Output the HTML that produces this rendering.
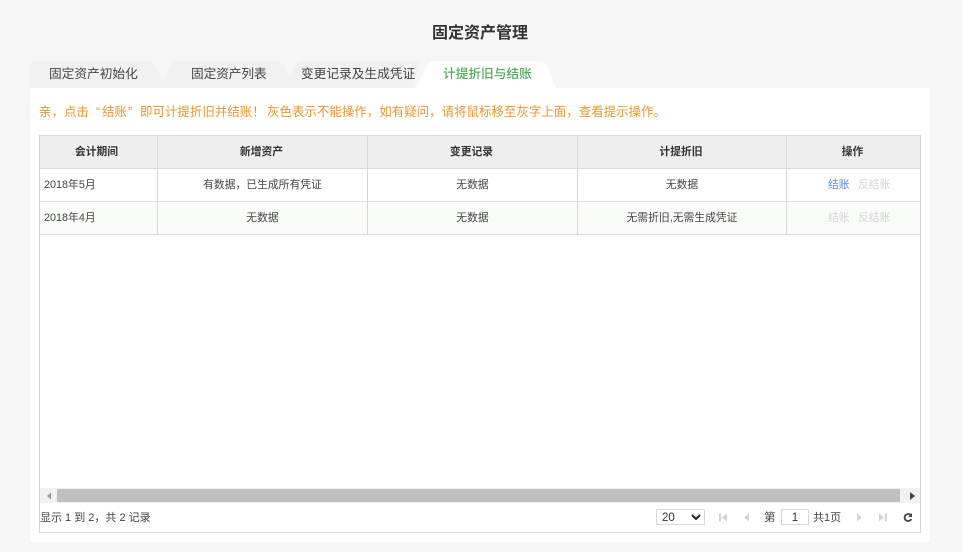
<!DOCTYPE html>
<html lang="zh-CN"><head><meta charset="utf-8"><style>
*{box-sizing:border-box;margin:0;padding:0}
html,body{width:963px;height:552px;overflow:hidden;background:#f6f6f6;font-family:"Liberation Sans","Noto Sans CJK SC",sans-serif;color:#333}
.a{position:absolute;white-space:nowrap}
.c{text-align:center}
.v{position:absolute;width:1px;background:#d6d6d6}
.h{position:absolute;height:1px;background:#dcdcdc;left:39px;width:882px}
.t{font-size:12.7px;top:65px;line-height:18px;color:#444}
.b{font-size:10.8px;line-height:16px;color:#444}
.th{font-size:10.8px;line-height:16px;top:144px;color:#333;font-weight:bold}
.n{position:absolute;white-space:nowrap;top:103px;font-size:12.48px;line-height:18px;color:#e8962e}
</style></head><body>
<div class="a c" style="left:380px;width:200px;top:23px;font-size:16px;line-height:22px;font-weight:bold;color:#333">固定资产管理</div>

<svg class="a" style="left:0;top:0" width="963" height="100">
<path d="M30 88V69Q30 61 38 61H148Q153 61 155 65L163 82L171 65Q173 61 178 61H276Q281 61 283 64L290 78L295 66Q297 61 302 61H420L412 88Z" fill="#f1f1f1"/>
<path d="M416 88L426 67Q429 61 436 61H538Q545 61 547 66L556 88Z" fill="#fff"/>
</svg>
<div class="a" style="left:30px;top:88px;width:900px;height:454px;background:#fff"></div>

<div class="a t" style="left:49px">固定资产初始化</div>
<div class="a t" style="left:191px;letter-spacing:-.1px">固定资产列表</div>
<div class="a t" style="left:301px">变更记录及生成凭证</div>
<div class="a t" style="left:443px;color:#52ad5c;font-weight:500">计提折旧与结账</div>

<div class="n" style="left:39px">亲，点击</div>
<div class="n" style="left:96px">“</div>
<div class="n" style="left:102px">结账</div>
<div class="n" style="left:128px">”</div>
<div class="n" style="left:140px">即可计提折旧并结账！</div>
<div class="n" style="left:267px">灰色表示不能操作，如有疑问，请将鼠标移至灰字上面，查看提示操作。</div>

<div class="a" style="left:39px;top:135px;width:882px;height:398px;border:1px solid #d6d6d6;background:#fff"></div>
<div class="a" style="left:40px;top:136px;width:880px;height:32px;background:#eeeeee"></div>
<div class="a" style="left:40px;top:202px;width:880px;height:32px;background:#fafcfa"></div>
<div class="h" style="top:168px"></div>
<div class="h" style="top:201px"></div>
<div class="h" style="top:234px"></div>
<div class="v" style="left:157px;top:136px;height:99px"></div>
<div class="v" style="left:367px;top:136px;height:99px"></div>
<div class="v" style="left:577px;top:136px;height:99px"></div>
<div class="v" style="left:786px;top:136px;height:99px"></div>

<div class="a c th" style="left:38px;width:117px">会计期间</div>
<div class="a c th" style="left:157px;width:209px">新增资产</div>
<div class="a c th" style="left:367px;width:209px">变更记录</div>
<div class="a c th" style="left:577px;width:208px">计提折旧</div>
<div class="a c th" style="left:786px;width:133px">操作</div>

<div class="a b" style="left:44px;top:177px">2018年5月</div>
<div class="a c b" style="left:158px;width:209px;top:177px">有数据，已生成所有凭证</div>
<div class="a c b" style="left:368px;width:209px;top:177px">无数据</div>
<div class="a c b" style="left:578px;width:208px;top:177px">无数据</div>
<div class="a b" style="left:828px;top:177px;color:#5b8ddc">结账</div>
<div class="a b" style="left:858px;top:177px;color:#d4d4d4">反结账</div>

<div class="a b" style="left:44px;top:210px">2018年4月</div>
<div class="a c b" style="left:158px;width:209px;top:210px">无数据</div>
<div class="a c b" style="left:368px;width:209px;top:210px">无数据</div>
<div class="a c b" style="left:578px;width:208px;top:210px">无需折旧,无需生成凭证</div>
<div class="a b" style="left:828px;top:210px;color:#d4d4d4">结账</div>
<div class="a b" style="left:858px;top:210px;color:#d4d4d4">反结账</div>

<div class="a" style="left:40px;top:488px;width:880px;height:15px;background:#f1f1f1"></div>
<div class="a" style="left:57px;top:489px;width:843px;height:13px;background:#c0c0c0"></div>

<div class="a b" style="left:40px;top:510px;color:#444;font-size:11px">显示 1 到 2，共 2 记录</div>

<div class="a" style="left:656px;top:509px;width:49px;height:16px;border:1px solid #d8d8d8;background:#fff"></div>
<div class="a b" style="left:662px;top:510px;color:#333;font-size:11.5px">20</div>
<div class="a" style="left:781px;top:509px;width:28px;height:16px;border:1px solid #d8d8d8;background:#fff"></div>
<div class="a c b" style="left:781px;top:510px;width:28px;color:#333;font-size:11.5px">1</div>
<div class="a b" style="left:764px;top:510px;font-size:11.500px">第</div>
<div class="a b" style="left:813px;top:510px;font-size:11px">共1页</div>

<svg class="a" style="left:0;top:480px" width="963" height="60" fill="none">
<path d="M51 12.500L47 16L51 19.500Z" fill="#999"/>
<path d="M910 12L915 16L910 20Z" fill="#444"/>
<path d="M692 35L696 39L700 35" stroke="#222" stroke-width="2"/>
<path d="M719 33.500H721V41.500H719ZM727 33.500V41.500L722 37.500Z" fill="#d4d4d4"/>
<path d="M749 33.500V41.500L744 37.500Z" fill="#d4d4d4"/>
<path d="M857 33.500V41.500L862 37.500Z" fill="#d4d4d4"/>
<path d="M879 33.500V41.500L884 37.500ZM885 33.500H887V41.500H885Z" fill="#d4d4d4"/>
<path d="M911 35.500A3.500 3.500 0 1 0 911.300 39" stroke="#444" stroke-width="1.800"/>
<path d="M912 33V37H908Z" fill="#444"/>
</svg>
</body></html>
